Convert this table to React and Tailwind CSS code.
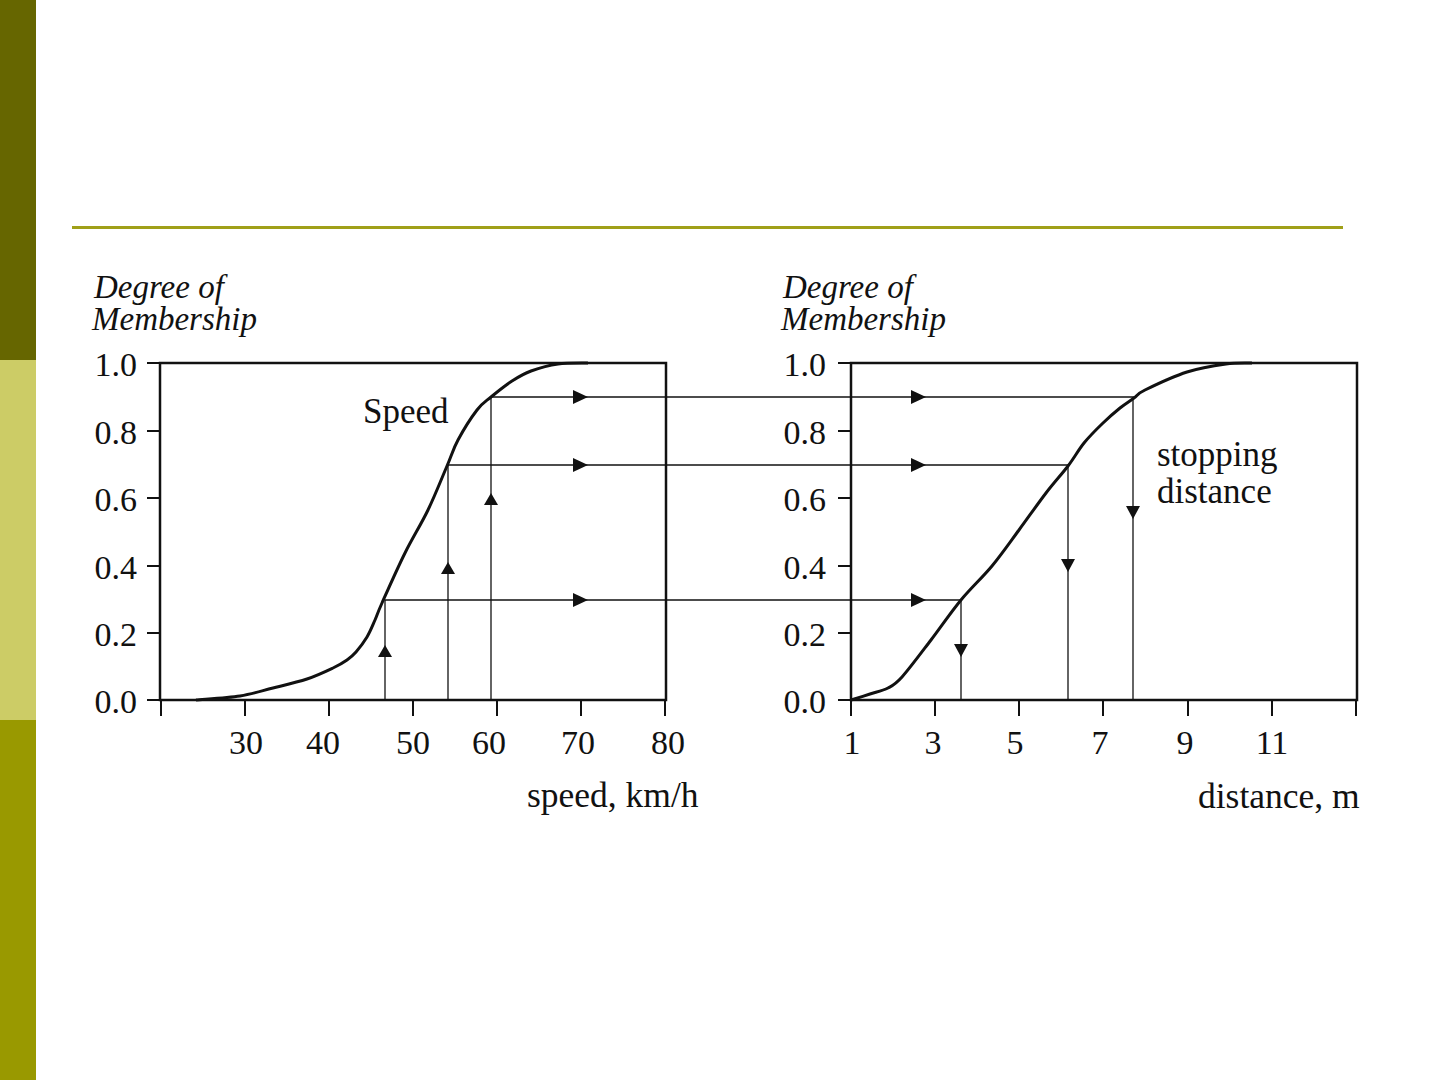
import React from "react";

const serif = { fontFamily: '"Liberation Serif", "Times New Roman", serif' };

const speedCurve = [
  [196, 700], [240, 696], [273, 688], [307, 679], [333, 668], [347, 660],
  [356, 652], [367, 637], [375, 620], [382, 603], [405, 553], [428, 510],
  [447, 466], [458, 440], [477, 410], [491, 397], [512, 381], [531, 371],
  [558, 364], [588, 363],
];

const distCurve = [
  [851, 700], [870, 694], [888, 688], [902, 677], [931, 640], [961, 600],
  [992, 566], [1019, 530], [1046, 493], [1068, 466], [1084, 443], [1103, 423],
  [1120, 408], [1134, 398], [1145, 390], [1187, 372], [1226, 364], [1252, 363],
];

const levels = [363, 431, 498, 566, 633, 700];
const levelLabels = ["1.0", "0.8", "0.6", "0.4", "0.2", "0.0"];

// catmull-rom through the traced points, so the curve isn't jagged
const toPath = (pts) => {
  let d = `M${pts[0][0]} ${pts[0][1]}`;
  for (let i = 0; i < pts.length - 1; i++) {
    const p0 = pts[i - 1] || pts[i];
    const p1 = pts[i];
    const p2 = pts[i + 1];
    const p3 = pts[i + 2] || p2;
    const c1x = p1[0] + (p2[0] - p0[0]) / 6;
    const c1y = p1[1] + (p2[1] - p0[1]) / 6;
    const c2x = p2[0] - (p3[0] - p1[0]) / 6;
    const c2y = p2[1] - (p3[1] - p1[1]) / 6;
    d += ` C${c1x.toFixed(1)} ${c1y.toFixed(1)} ${c2x.toFixed(1)} ${c2y.toFixed(1)} ${p2[0]} ${p2[1]}`;
  }
  return d;
};

const right = (x, y) => `${x - 15},${y - 7} ${x},${y} ${x - 15},${y + 7}`;
const up = (x, y) => `${x - 7},${y + 12} ${x},${y} ${x + 7},${y + 12}`;
const down = (x, y) => `${x - 7},${y - 13} ${x},${y} ${x + 7},${y - 13}`;

function Axis({ left, labelEnd, ticks, tickLabels, titleX }) {
  const boxRight = left + 506;
  return (
    <g>
      <text fontSize={33} fontStyle="italic" fill="#111">
        <tspan x={titleX} y={298}>Degree of</tspan>
        <tspan x={titleX - 2} y={330}>Membership</tspan>
      </text>
      {levels.map((y, i) => (
        <g key={y}>
          <line x1={left - 13} y1={y} x2={left} y2={y} stroke="#111" strokeWidth={2} />
          <text x={labelEnd} y={y + 13} fontSize={34} textAnchor="end" fill="#111">
            {levelLabels[i]}
          </text>
        </g>
      ))}
      <rect x={left} y={363} width={boxRight - left} height={337} fill="none" stroke="#111" strokeWidth={2.5} />
      {ticks.map((x) => (
        <line key={x} x1={x} y1={700} x2={x} y2={716} stroke="#111" strokeWidth={2} />
      ))}
      {tickLabels.map(([t, x]) => (
        <text key={t} x={x} y={754} fontSize={34} textAnchor="middle" fill="#111">{t}</text>
      ))}
    </g>
  );
}

function MembershipChart() {
  return (
    <svg
      width="1290"
      height="570"
      viewBox="76 255 1290 570"
      style={serif}
      className="block"
    >
      <Axis
        left={160}
        labelEnd={137}
        titleX={94}
        ticks={[161, 245, 329, 413, 497, 581, 665]}
        tickLabels={[["30", 246], ["40", 323], ["50", 413], ["60", 489], ["70", 578], ["80", 668]]}
      />
      <Axis
        left={851}
        labelEnd={826}
        titleX={783}
        ticks={[851, 935, 1019, 1103, 1188, 1272, 1356]}
        tickLabels={[["1", 852], ["3", 933], ["5", 1015], ["7", 1100], ["9", 1185], ["11", 1272]]}
      />

      {/* projection lines */}
      <g stroke="#111" strokeWidth={1.3}>
        <line x1={491} y1={397} x2={1134} y2={397} />
        <line x1={448} y1={465} x2={1068} y2={465} />
        <line x1={385} y1={600} x2={961} y2={600} />
        <line x1={385} y1={700} x2={385} y2={600} />
        <line x1={448} y1={700} x2={448} y2={465} />
        <line x1={491} y1={700} x2={491} y2={397} />
        <line x1={961} y1={600} x2={961} y2={700} />
        <line x1={1068} y1={465} x2={1068} y2={700} />
        <line x1={1133} y1={397} x2={1133} y2={700} />
      </g>

      <g fill="#111">
        {[397, 465, 600].map((y) => (
          <g key={y}>
            <polygon points={right(588, y)} />
            <polygon points={right(926, y)} />
          </g>
        ))}
        <polygon points={up(385, 645)} />
        <polygon points={up(448, 562)} />
        <polygon points={up(491, 493)} />
        <polygon points={down(961, 657)} />
        <polygon points={down(1068, 572)} />
        <polygon points={down(1133, 519)} />
      </g>

      <path d={toPath(speedCurve)} fill="none" stroke="#111" strokeWidth={3} strokeLinejoin="round" />
      <path d={toPath(distCurve)} fill="none" stroke="#111" strokeWidth={3} strokeLinejoin="round" />

      <text x={363} y={423} fontSize={35} fill="#111">Speed</text>
      <text fontSize={35} fill="#111">
        <tspan x={1157} y={466}>stopping</tspan>
        <tspan x={1157} y={503}>distance</tspan>
      </text>
      <text x={527} y={807} fontSize={35.5} fill="#111">speed, km/h</text>
      <text x={1198} y={808} fontSize={35.5} fill="#111">distance, m</text>
    </svg>
  );
}

export default function App() {
  return (
    <div className="flex min-h-[1080px] w-[1440px] bg-white">
      <div className="flex w-[36px] shrink-0 flex-col">
        <div className="h-[360px] bg-[#666600]" />
        <div className="h-[360px] bg-[#cccc66]" />
        <div className="h-[360px] bg-[#999900]" />
      </div>
      <div className="flex-1 pl-[36px] pt-[226px]">
        <div className="h-[3px] w-[1271px] bg-[#a0a018]" />
        <div className="ml-[4px] mt-[26px]">
          <MembershipChart />
        </div>
      </div>
    </div>
  );
}
